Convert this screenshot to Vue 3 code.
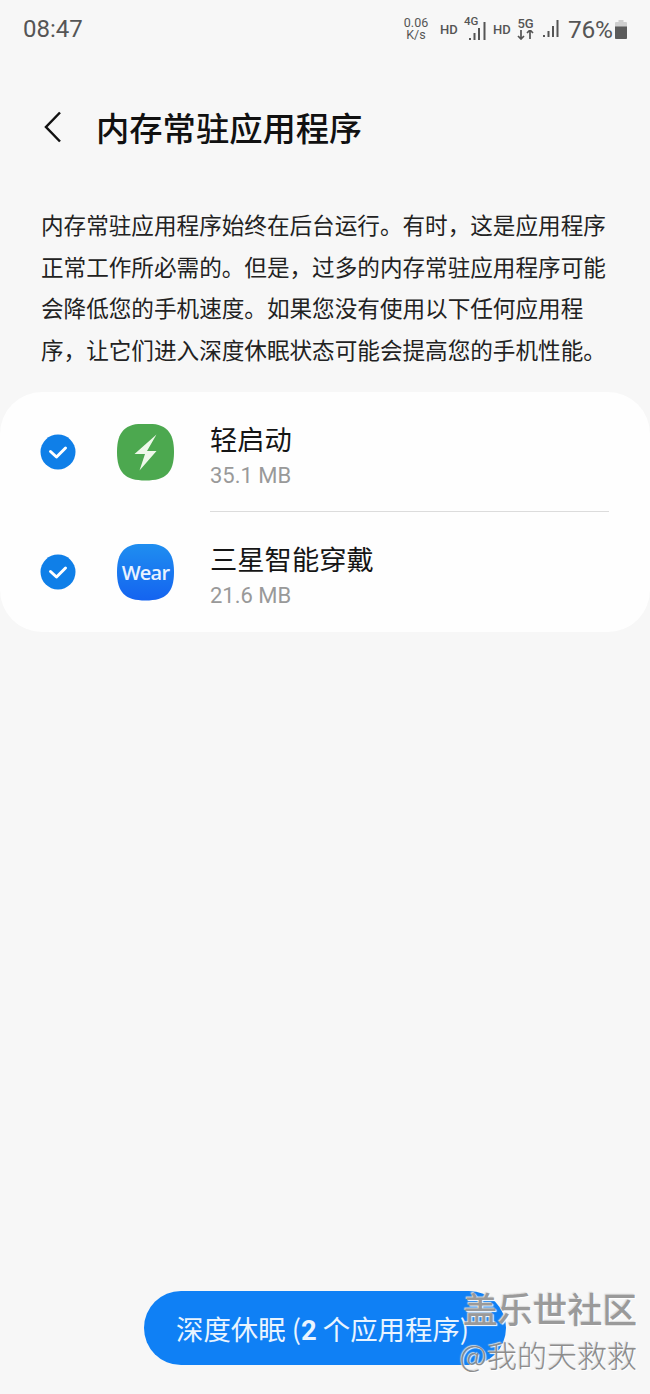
<script setup>
const desc = ['内存常驻应用程序始终在后台运行。有时\uFF0C这是应用程序', '正常工作所必需的。但是\uFF0C过多的内存常驻应用程序可能', '会降低您的手机速度。如果您没有使用以下任何应用程', '序\uFF0C让它们进入深度休眠状态可能会提高您的手机性能。']
const apps = [
  { name: '轻启动', size: '35.1 MB', icon: 'bolt' },
  { name: '三星智能穿戴', size: '21.6 MB', icon: 'wear' }
]
</script>

<template>
  <div class="page">
    <div class="status">
      <span class="time">08:47</span>
      <div class="status-right">
        <span class="speed">0.06<br>K/s</span>
        <span class="hd hd1">HD</span>
        <span class="net">
          <span class="net-label">4G</span>
          <svg width="22" height="26" viewBox="0 0 22 26"><path d="M5 24h2v-2H5zM9.500 24h2v-7h-2zM14 24h2V12h-2zM19.500 24h2V6h-2z" fill="#555"/></svg>
        </span>
        <span class="hd hd2">HD</span>
        <span class="net-5g">
          <span>5G</span>
          <svg width="17" height="10" viewBox="0 0 17 10"><path d="M4 0v9M1 6l3 3 3-3M13 9V0M10 3l3-3 3 3" fill="none" stroke="#555" stroke-width="1.700"/></svg>
        </span>
        <svg class="signal" width="16" height="18" viewBox="0 0 16 18"><path d="M0 17h2v-2H0zM4.500 17h2v-6h-2zM9 17h2V6H9zM13.500 17h2V0h-2z" fill="#555"/></svg>
        <span class="pct">76%</span>
        <svg class="battery" width="12" height="19" viewBox="0 0 12 19"><path d="M3.500 0h5v2H11a1 1 0 0 1 1 1v15a1 1 0 0 1-1 1H1a1 1 0 0 1-1-1V3a1 1 0 0 1 1-1h2.500z" fill="#cfcfcf"/><path d="M0 6.500h12V18a1 1 0 0 1-1 1H1a1 1 0 0 1-1-1z" fill="#5b5b5b"/></svg>
      </div>
    </div>

    <div class="head">
      <svg class="back" width="18" height="32" viewBox="0 0 18 32"><path d="M16 1.500 2 16l14 14.500" fill="none" stroke="#111" stroke-width="2.500"/></svg>
      <h1>内存常驻应用程序</h1>
    </div>

    <div class="desc">
      <div v-for="l in desc" :key="l">{{ l }}</div>
    </div>

    <div class="card">
      <div v-for="(a, i) in apps" :key="a.name" class="row">
        <svg class="check" width="36" height="36" viewBox="0 0 36 36">
          <circle cx="18" cy="18" r="17.500" fill="#0f7fe8"/>
          <path d="M10.500 17.500 16.500 23 25.500 14" fill="none" stroke="#fff" stroke-width="3" stroke-linecap="round" stroke-linejoin="round"/>
        </svg>
        <div class="icon" :class="a.icon">
          <svg v-if="a.icon == 'bolt'" width="57" height="57" viewBox="0 0 57 57"><path d="M39.500 10.500 17.500 30H28L22.500 46.500 39.500 27H30z" fill="#eef8ea"/></svg>
          <span v-else>Wear</span>
        </div>
        <div class="info" :class="{ line: i == 0 }">
          <div class="name">{{ a.name }}</div>
          <div class="size">{{ a.size }}</div>
        </div>
      </div>
    </div>

    <div class="foot">
      <button class="sleep">深度休眠 (<b>2</b> 个应用程序)</button>
    </div>

    <div class="mark">
      <div class="mark-a">盖乐世社区</div>
      <div class="mark-b">@我的天救救</div>
    </div>
  </div>
</template>

<style scoped>
.page {
  position: relative;
  height: 1394px;
  background: #f7f7f7;
  display: flex;
  flex-direction: column;
  overflow: hidden;
  font-family: "Noto Sans CJK SC", "Liberation Sans", sans-serif;
  color: #111;
}
.status {
  height: 58px;
  display: flex;
  align-items: center;
  justify-content: space-between;
  padding: 0 23px 0 23px;
  color: #555;
}
.time {
  font: 24px/1 "Roboto", sans-serif;
}
.status-right {
  display: flex;
  align-items: center;
  font-family: "Roboto", sans-serif;
}
.status-right > * {
  flex: none;
}
.speed {
  width: 26px;
  font-size: 12.500px;
  line-height: 12px;
  text-align: center;
}
.hd {
  font-size: 13px;
  font-weight: 500;
  width: 16px;
}
.hd1 {
  margin-left: 11px;
}
.hd2 {
  margin-left: 7px;
}
.net {
  position: relative;
  display: block;
  width: 22px;
  height: 26px;
  margin-left: 8px;
}
.net svg {
  display: block;
}
.net-label {
  position: absolute;
  left: 0;
  top: 0;
  font-size: 11.500px;
  line-height: 11px;
  font-weight: 500;
}
.net-5g {
  display: flex;
  flex-direction: column;
  align-items: center;
  margin-left: 8px;
  width: 17px;
  font-size: 13px;
  font-weight: 500;
  line-height: 12px;
}
.signal {
  margin-left: 9px;
}
.pct {
  width: 42px;
  font-size: 24.500px;
  margin-left: 9px;
  letter-spacing: -0.300px;
}
.battery {
  margin-left: 5px;
}
.head {
  display: flex;
  align-items: center;
  height: 64px;
  margin-top: 37px;
  padding-left: 44px;
}
.back {
  margin-right: 34px;
}
h1 {
  margin: 0;
  font-size: 33.300px;
  font-weight: 500;
  line-height: 64px;
}
.desc {
  margin-top: 45px;
  padding-left: 41px;
  font-size: 22.600px;
  line-height: 41.500px;
  color: #222;
  white-space: nowrap;
}
.card {
  margin-top: 22px;
  height: 240px;
  background: #fefefe;
  border-radius: 42px;
}
.row {
  display: flex;
  align-items: center;
  height: 120px;
  padding-left: 40px;
}
.check {
  flex: none;
}
.icon {
  flex: none;
  width: 57px;
  height: 57px;
  margin-left: 41px;
  clip-path: path("M28.500 0C49 0 57 8 57 28.500S49 57 28.500 57 0 49 0 28.500 8 0 28.500 0Z");
  display: flex;
  align-items: center;
  justify-content: center;
}
.bolt {
  background: #4ca84f;
}
.wear {
  background: linear-gradient(#1f8ef0, #1463f0);
  color: #e8f2ff;
  font: 600 20px "Open Sans", sans-serif;
  letter-spacing: -0.800px;
}
.info {
  align-self: stretch;
  width: 399px;
  margin-left: 36px;
  padding-top: 26px;
  box-sizing: border-box;
}
.line {
  border-bottom: 1px solid #dcdcdc;
}
.name {
  font-size: 27.300px;
  line-height: 40px;
  color: #151515;
}
.size {
  font: 22px/28px "Roboto", sans-serif;
  color: #999;
  margin-top: 4px;
}
.foot {
  margin-top: auto;
  padding: 0 0 29px 144px;
}
.sleep {
  display: block;
  width: 362px;
  height: 74px;
  padding: 0 0 0 32px;
  border: 0;
  border-radius: 37px;
  background: #0f80f5;
  color: #e9f4ff;
  font-family: "Noto Sans CJK SC", "Liberation Sans", sans-serif;
  font-size: 27.400px;
  text-align: left;
  white-space: nowrap;
}
.sleep b {
  font-family: "Roboto", sans-serif;
  font-weight: 700;
}
.mark {
  position: absolute;
  right: 13px;
  bottom: 18px;
  text-align: right;
  white-space: nowrap;
  color: #8c8c8c;
  text-shadow: 1px 1px 1px #fff, -1px -1px 1px #dcdcdc;
}
.mark-a {
  font-size: 34.800px;
  font-weight: 500;
  line-height: 44px;
  margin-bottom: 2px;
  color: #9a9a9a;
}
.mark-b {
  font-size: 30px;
  font-weight: 300;
  line-height: 44px;
}
</style>

<style>
html, body {
  margin: 0;
  background: #f7f7f7;
}
</style>
